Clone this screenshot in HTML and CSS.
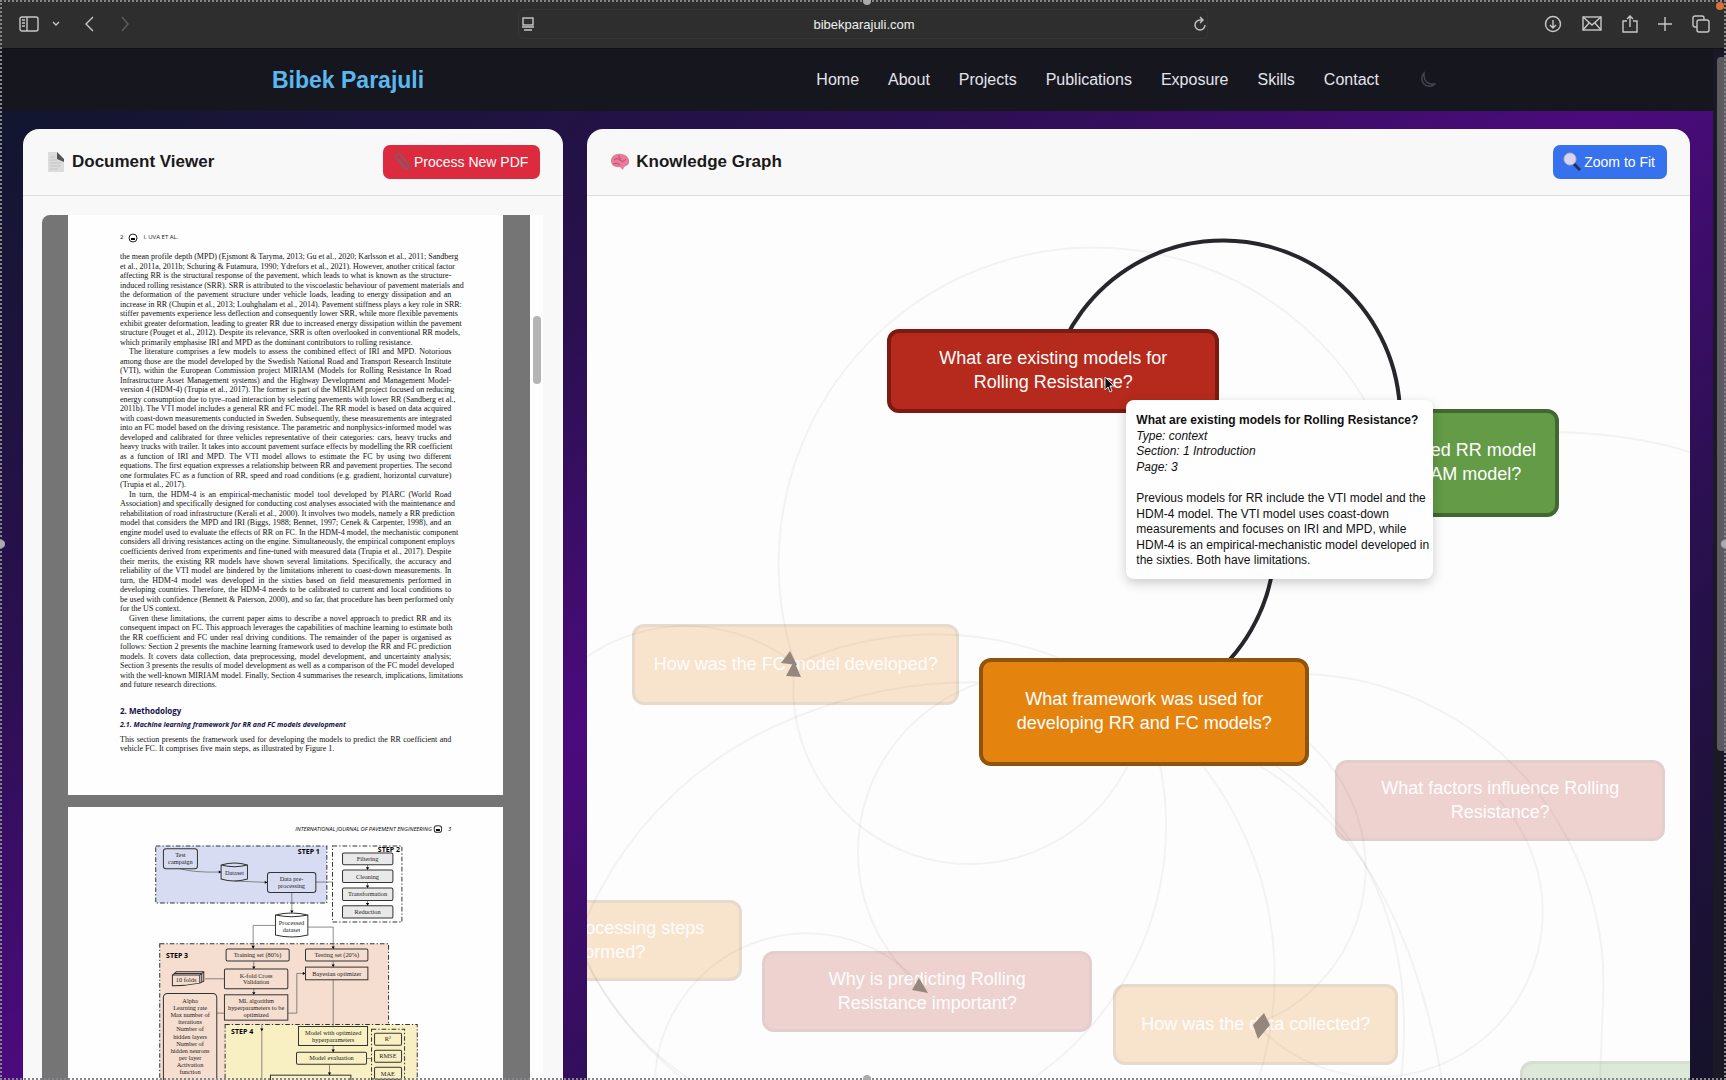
FILE: index.html
```html
<!DOCTYPE html>
<html lang="en">
	<head>
		<meta charset="utf-8" />
		<title>Bibek Parajuli - Knowledge Graph</title>
		<link rel="stylesheet" href="styles.css">
	</head>
	<body>
		<div class="toolbar">
			<div class="tools">
				<button aria-label="Sidebar"><svg width="20" height="16" viewBox="0 0 20 16"><rect x="1" y="1" width="18" height="14" rx="2"/><path d="M8 1v14M3 4h3M3 7h3M3 10h3"/></svg></button>
				<button class="tab-menu" aria-label="Tab groups"><svg width="8" height="8" viewBox="0 0 8 8"><path d="M1 2l3 3 3-3"/></svg></button>
				<button class="back" aria-label="Back"><svg width="10" height="16" viewBox="0 0 10 16"><path d="M9 1L2 8l7 7"/></svg></button>
				<button class="forward" aria-label="Forward"><svg width="10" height="16" viewBox="0 0 10 16"><path d="M2 1l6 7-6 7"/></svg></button>
			</div>
			<div class="address">
				<button aria-label="Reader"><svg width="14" height="14" viewBox="0 0 14 14"><rect x="2" y="1" width="10" height="7"/><path d="M1 10h12M3 13h8"/></svg></button>
				<input type="text" value="bibekparajuli.com" aria-label="Address">
				<button aria-label="Reload"><svg width="14" height="16" viewBox="0 0 14 16"><path d="M12 9a5 5 0 1 1-5-5h2M7 1l3 3-3 3"/></svg></button>
			</div>
			<div class="tools actions">
				<button aria-label="Downloads"><svg width="18" height="18" viewBox="0 0 18 18"><circle cx="9" cy="9" r="7.500"/><path d="M9 5v8M6 10l3 3 3-3"/></svg></button>
				<button aria-label="Mail"><svg width="20" height="16" viewBox="0 0 20 16"><rect x="1" y="1" width="18" height="13"/><path d="M1 1l9 8 9-8M1 14l6-7M19 14l-6-7"/></svg></button>
				<button aria-label="Share"><svg width="16" height="18" viewBox="0 0 16 18"><path d="M5 6H1v11h14V6h-4M8 12V1M5 4l3-3 3 3"/></svg></button>
				<button aria-label="New tab"><svg width="14" height="14" viewBox="0 0 14 14"><path d="M7 0v14M0 7h14"/></svg></button>
				<button aria-label="All tabs"><svg width="18" height="18" viewBox="0 0 18 18"><rect x="5" y="5" width="12" height="12" rx="2"/><path d="M5 12H3a2 2 0 0 1-2-2V3a2 2 0 0 1 2-2h7a2 2 0 0 1 2 2v2"/></svg></button>
			</div>
		</div>

		<div class="window">
			<div class="page">
				<header class="site-header">
					<div class="site-nav">
						<a class="logo" href="#">Bibek Parajuli</a>
						<nav>
							<a href="#">Home</a>
							<a href="#">About</a>
							<a href="#">Projects</a>
							<a href="#">Publications</a>
							<a href="#">Exposure</a>
							<a href="#">Skills</a>
							<a href="#">Contact</a>
							<button class="theme" aria-label="Dark mode"><svg width="18" height="18" viewBox="0 0 18 18"><path d="M6 2a7 7 0 1 0 11 11h-3A8 8 0 0 1 6 5z"/></svg></button>
						</nav>
					</div>
				</header>

				<main class="panels">
					<section class="panel">
						<div class="panel-header">
							<h2><svg width="20" height="22" viewBox="0 0 20 22"><path d="M2 1h9l7 7v13H2z" fill="#dcdcdc"/><path d="M11 1l7 7v3l-7-3z" fill="#555"/><path d="M4 6h5M4 9h7M4 12h11M4 15h11M4 18h8" stroke="#c4c4c4"/></svg>Document Viewer</h2>
							<button class="btn red"><svg width="18" height="20" viewBox="0 0 18 20"><path d="M13 17L3 6a3 3 0 0 1 4-4l9 11a2 2 0 0 1-3 3L6 7" fill="none" stroke="#8d5560" stroke-width="2"/></svg>Process New PDF</button>
						</div>
						<div class="viewer">
							<div class="pdf">
								<article class="sheet">
									<div class="running">2 <svg width="10" height="10" viewBox="0 0 10 10"><circle cx="5" cy="5" r="4" fill="none" stroke="#222"/><path d="M3 5h4v2H3z"/></svg> I. UVA ET AL.</div>
									<p>
										<span>the mean profile depth (MPD) (Ejsmont &amp; Taryma, 2013; Gu et al., 2020; Karlsson et al., 2011; Sandberg</span>
										<span>et al., 2011a, 2011b; Schuring &amp; Futamura, 1990; Ydrefors et al., 2021). However, another critical factor</span>
										<span>affecting RR is the structural response of the pavement, which leads to what is known as the structure-</span>
										<span>induced rolling resistance (SRR). SRR is attributed to the viscoelastic behaviour of pavement materials and</span>
										<span>the deformation of the pavement structure under vehicle loads, leading to energy dissipation and an</span>
										<span>increase in RR (Chupin et al., 2013; Louhghalam et al., 2014). Pavement stiffness plays a key role in SRR:</span>
										<span>stiffer pavements experience less deflection and consequently lower SRR, while more flexible pavements</span>
										<span>exhibit greater deformation, leading to greater RR due to increased energy dissipation within the pavement</span>
										<span>structure (Pouget et al., 2012). Despite its relevance, SRR is often overlooked in conventional RR models,</span>
										<span>which primarily emphasise IRI and MPD as the dominant contributors to rolling resistance.</span>
									</p>
									<p class="indent">
										<span>The literature comprises a few models to assess the combined effect of IRI and MPD. Notorious</span>
										<span>among those are the model developed by the Swedish National Road and Transport Research Institute</span>
										<span>(VTI), within the European Commission project MIRIAM (Models for Rolling Resistance In Road</span>
										<span>Infrastructure Asset Management systems) and the Highway Development and Management Model-</span>
										<span>version 4 (HDM-4) (Trupia et al., 2017). The former is part of the MIRIAM project focused on reducing</span>
										<span>energy consumption due to tyre–road interaction by selecting pavements with lower RR (Sandberg et al.,</span>
										<span>2011b). The VTI model includes a general RR and FC model. The RR model is based on data acquired</span>
										<span>with coast-down measurements conducted in Sweden. Subsequently, these measurements are integrated</span>
										<span>into an FC model based on the driving resistance. The parametric and nonphysics-informed model was</span>
										<span>developed and calibrated for three vehicles representative of their categories: cars, heavy trucks and</span>
										<span>heavy trucks with trailer. It takes into account pavement surface effects by modelling the RR coefficient</span>
										<span>as a function of IRI and MPD. The VTI model allows to estimate the FC by using two different</span>
										<span>equations. The first equation expresses a relationship between RR and pavement properties. The second</span>
										<span>one formulates FC as a function of RR, speed and road conditions (e.g. gradient, horizontal curvature)</span>
										<span>(Trupia et al., 2017).</span>
									</p>
									<p class="indent">
										<span>In turn, the HDM-4 is an empirical-mechanistic model tool developed by PIARC (World Road</span>
										<span>Association) and specifically designed for conducting cost analyses associated with the maintenance and</span>
										<span>rehabilitation of road infrastructure (Kerali et al., 2000). It involves two models, namely a RR prediction</span>
										<span>model that considers the MPD and IRI (Biggs, 1988; Bennet, 1997; Cenek &amp; Carpenter, 1998), and an</span>
										<span>engine model used to evaluate the effects of RR on FC. In the HDM-4 model, the mechanistic component</span>
										<span>considers all driving resistances acting on the engine. Simultaneously, the empirical component employs</span>
										<span>coefficients derived from experiments and fine-tuned with measured data (Trupia et al., 2017). Despite</span>
										<span>their merits, the existing RR models have shown several limitations. Specifically, the accuracy and</span>
										<span>reliability of the VTI model are hindered by the limitations inherent to coast-down measurements. In</span>
										<span>turn, the HDM-4 model was developed in the sixties based on field measurements performed in</span>
										<span>developing countries. Therefore, the HDM-4 needs to be calibrated to current and local conditions to</span>
										<span>be used with confidence (Bennett &amp; Paterson, 2000), and so far, that procedure has been performed only</span>
										<span>for the US context.</span>
									</p>
									<p class="indent">
										<span>Given these limitations, the current paper aims to describe a novel approach to predict RR and its</span>
										<span>consequent impact on FC. This approach leverages the capabilities of machine learning to estimate both</span>
										<span>the RR coefficient and FC under real driving conditions. The remainder of the paper is organised as</span>
										<span>follows: Section 2 presents the machine learning framework used to develop the RR and FC prediction</span>
										<span>models. It covers data collection, data preprocessing, model development, and uncertainty analysis;</span>
										<span>Section 3 presents the results of model development as well as a comparison of the FC model developed</span>
										<span>with the well-known MIRIAM model. Finally, Section 4 summarises the research, implications, limitations</span>
										<span>and future research directions.</span>
									</p>
									<h3>2. Methodology</h3>
									<h4>2.1. Machine learning framework for RR and FC models development</h4>
									<p>
										<span>This section presents the framework used for developing the models to predict the RR coefficient and</span>
										<span>vehicle FC. It comprises five main steps, as illustrated by Figure 1.</span>
									</p>
								</article>
								<article class="sheet figure">
									<svg viewBox="84 52 1305 900">
										<text class="head" x="970" y="125">INTERNATIONAL JOURNAL OF PAVEMENT ENGINEERING</text>
										<rect class="box" x="1182" y="108" width="22" height="20" rx="8"/><path d="M1187 118h12v6h-12z"/>
										<text class="head" x="1228" y="125">3</text>

										<rect class="step" x="347" y="169" width="513" height="171" fill="#d8dcf2"/>
										<rect class="step" x="877" y="169" width="208" height="228" fill="#fdfdfd"/>
										<rect class="step" x="359" y="462" width="686" height="460" fill="#f5ddd0"/>
										<rect class="step" x="555" y="704" width="576" height="240" fill="#f8f0c2"/>
										<text class="title" x="806" y="192">STEP 1</text>
										<text class="title" x="1046" y="188">STEP 2</text>
										<text class="title" x="411" y="504">STEP 3</text>
										<text class="title" x="606" y="732">STEP 4</text>

										<g class="line">
											<path d="M420 237q40 12 122 10M583 274l98 4M827 277h50M755 308v62M706 407h-67v70M803 412h76v66M641 514v24M641 597v18M879 514v18M879 570v140M982 225v16M982 278v17M982 332v16M495 567h58M530 670h23M743 670h27V551h26M665 704v240M879 767v20M868 823v33M979 806h15"/>
										</g>
										<path d="M536 242l8 5-8 4zM674 273l8 5-8 4zM750 362h10l-5 8zM634 468h10l-5 9zM874 470h10l-5 8zM636 530h10l-5 8zM636 607h10l-5 8zM874 524h10l-5 8zM977 233h10l-5 8zM977 287h10l-5 8zM977 340h10l-5 8zM788 546l8 5-8 5zM874 779h10l-5 8zM863 848h10l-5 8zM660 716h10l-5 8z"/>
										<g class="box">
											<rect x="370" y="177" width="102" height="60" rx="8"/>
											<path d="M543 226q40-12 79 0v42q-40 12-79 0zM543 226q40 10 79 0"/>
											<rect x="682" y="248" width="145" height="60" rx="8"/>
											<path d="M706 376q48-12 97 0v60q-48 12-97 0zM706 376q48 10 97 0"/>
											<rect class="gray" x="907" y="190" width="151" height="35" rx="4"/>
											<rect class="gray" x="907" y="241" width="151" height="37" rx="4"/>
											<rect class="gray" x="907" y="295" width="151" height="37" rx="4"/>
											<rect class="gray" x="907" y="348" width="151" height="37" rx="4"/>
											<rect x="558" y="478" width="189" height="36" rx="4"/>
											<rect x="796" y="478" width="187" height="36" rx="4"/>
											<rect x="553" y="538" width="190" height="59" rx="4"/>
											<rect x="796" y="532" width="187" height="38"/>
											<rect x="553" y="615" width="190" height="76"/>
											<path d="M397 556h82v24q-40 8-82 8zM397 556l12-10h82v28l-12 6M479 556l12-10M403 551h82v26"/>
											<rect x="370" y="611" width="160" height="320" rx="12"/>
											<rect x="775" y="710" width="207" height="57"/>
											<rect x="769" y="787" width="210" height="36" rx="4"/>
											<rect x="691" y="856" width="241" height="50"/>
											<rect class="step" x="994" y="718" width="99" height="220"/>
											<rect x="1003" y="730" width="81" height="36" rx="4"/>
											<rect x="1003" y="781" width="81" height="36" rx="4"/>
											<rect x="1003" y="832" width="81" height="36" rx="4"/>
										</g>
										<g class="label">
											<text x="421" y="203">Test</text><text x="421" y="223">campaign</text>
											<text x="583" y="256">Dataset</text>
											<text x="754" y="275">Data pre-</text><text x="754" y="296">processing</text>
											<text x="754" y="407">Processed</text><text x="754" y="428">dataset</text>
											<text x="982" y="214">Filtering</text><text x="982" y="267">Cleaning</text>
											<text x="982" y="320">Transformation</text><text x="982" y="374">Reduction</text>
											<text x="652" y="503">Training set (80%)</text><text x="890" y="503">Testing set (20%)</text>
											<text x="648" y="564">K-fold Cross</text><text x="648" y="584">Validation</text>
											<text x="890" y="558">Bayesian optimizer</text>
											<text x="438" y="578">10 folds</text>
											<text x="648" y="640">ML algorithm</text><text x="648" y="661">hyperparameters to be</text><text x="648" y="682">optimized</text>
											<text x="450" y="640">Alpha</text><text x="450" y="661">Learning rate</text><text x="450" y="682">Max number of</text>
											<text x="450" y="704">iterations</text><text x="450" y="725">Number of</text><text x="450" y="747">hidden layers</text>
											<text x="450" y="768">Number of</text><text x="450" y="790">hidden neurons</text><text x="450" y="811">per layer</text>
											<text x="450" y="832">Activation</text><text x="450" y="853">function</text>
											<text x="879" y="736">Model with optimized</text><text x="879" y="757">hyperparameters</text>
											<text x="874" y="812">Model evaluation</text>
											<text x="1043" y="754">R²</text><text x="1043" y="806">RMSE</text><text x="1043" y="857">MAE</text>
										</g>
									</svg>
								</article>
							</div>
							<div class="pdf-scroll"><div class="pdf-thumb"></div></div>
						</div>
					</section>

					<section class="panel">
						<div class="panel-header">
							<h2><svg width="20" height="20" viewBox="0 0 20 20"><path d="M1 9C1 4 6 1 11 2c5 0 9 4 8 9-1 3-4 3-5 4l-1 3-3-3c-5 1-9-2-9-6z" fill="#e87b9c"/><path d="M4 8q3-3 6 0t6-1M3 12q4-2 7 1M9 3q-1 3 2 4" fill="none" stroke="#bd4a72"/></svg>Knowledge Graph</h2>
							<button class="btn blue"><svg width="18" height="20" viewBox="0 0 18 20"><path d="M11 12l6 6" stroke="#26304c" stroke-width="3"/><circle cx="7" cy="7" r="6" fill="#dcd3ec" stroke="#b9b4ce"/></svg>Zoom to Fit</button>
						</div>
						<div class="graph">
							<!-- edges are half circles between two node centres -->
							<svg class="edges" width="1103" height="884" viewBox="587 196 1103 884">
								<g class="faint">
									<path d="M795 664A315 315 0 0 1 1394 463"/>
									<path d="M795 664A176 176 0 0 0 1144 712"/>
									<path d="M795 664A340 340 0 0 1 1073 1286"/>
									<path d="M795 664A175 175 0 0 0 577 940"/>
									<path d="M1144 712A305 305 0 0 1 577 940"/>
									<path d="M1144 712A177 177 0 0 0 926 991"/>
									<path d="M1144 712A165 165 0 0 1 1256 1024"/>
									<path d="M1144 712A310 310 0 0 1 1603 1000L1600 1080"/>
									<path d="M1499 800A165 165 0 0 1 1256 1024"/>
									<path d="M577 940Q640 780 796 717Q960 650 1144 712"/>
									<path d="M1144 712Q1290 760 1364 863Q1420 950 1442 1080"/>
									<path d="M1144 712Q1240 725 1320 803Q1420 910 1401 1080"/>
									<path d="M926 991A152 152 0 0 0 655 1080"/>
									<path d="M577 940Q610 1020 684 1080"/>
									<path d="M1550 432Q1630 433 1690 452"/>
								</g>
								<path class="strong" d="M1053 371A176 176 0 0 1 1394 463"/>
								<path class="strong" d="M1053 371A176 176 0 0 1 1144 712"/>
							</svg>
							<div class="node orange dim fc">How was the FC model developed?</div>
							<div class="node orange dim pre">What data pre-processing steps<br>were performed?</div>
							<div class="node red dim why">Why is predicting Rolling<br>Resistance important?</div>
							<div class="node orange dim data">How was the data collected?</div>
							<div class="node red dim factors">What factors influence Rolling<br>Resistance?</div>
							<div class="node green dim results"></div>
							<div class="node green compare">How does the developed RR model<br>compare to the MIRIAM model?</div>
							<div class="node orange framework">What framework was used for<br>developing RR and FC models?</div>
							<div class="node red existing">What are existing models for<br>Rolling Resistance?</div>
							<svg class="edges" width="1103" height="884" viewBox="587 196 1103 884">
								<path class="arrow" d="M790 651l7 14-16-2zM794 661l7 16-15-1zM919 978l9 15-16-3zM1264 1013l6 12-12 14-5-14z"/>
							</svg>
							<div class="tooltip">
								<b>What are existing models for Rolling Resistance?</b><br>
								<i>Type: context</i><br>
								<i>Section: 1 Introduction</i><br>
								<i>Page: 3</i><br><br>
								Previous models for RR include the VTI model and the<br>
								HDM-4 model. The VTI model uses coast-down<br>
								measurements and focuses on IRI and MPD, while<br>
								HDM-4 is an empirical-mechanistic model developed in<br>
								the sixties. Both have limitations.
							</div>
							<svg class="cursor" width="12" height="18" viewBox="0 0 12 18"><path d="M1 1v13l3-3 2 5 2-1-2-5h4z" fill="#111" stroke="#ddd"/></svg>
						</div>
					</section>
				</main>
			</div>
			<div class="scrollbar"><div class="thumb"></div></div>
		</div>
		<div class="selection"><i class="top"></i><i class="bottom"></i><i class="left"></i><i class="right"></i><i class="corner"></i></div>
	</body>
</html>
```
FILE: styles.css
```css
* {box-sizing:border-box;}
body {margin:0;height:100vh;overflow:hidden;display:flex;flex-direction:column;background:#16161f;font-family:"Liberation Sans", Arial, Helvetica, sans-serif;color:#1a1a1a;}
button {font:inherit;border:0;background:none;padding:0;display:flex;align-items:center;}
a {text-decoration:none;}

/* browser toolbar */
.toolbar {flex:none;height:49px;display:grid;grid-template-columns:3fr 4fr 3fr;align-items:center;background:#2e2e2e;border-bottom:1px solid #111;}
.toolbar svg {fill:none;stroke:#c8c8c8;stroke-width:1.4;}
.tools {display:flex;align-items:center;padding:0 19px;}
.tab-menu {margin-left:13px;}
.back {margin-left:24px;}
.forward {margin-left:26px;opacity:.3;}
.actions {justify-content:flex-end;gap:20px;padding:0 16px;}
.address {display:flex;align-items:center;height:30px;padding:0 0 0 2px;border:1px solid #363636;border-radius:6px;}
.address input {flex:1;min-width:0;border:0;background:none;color:#eee;font:13px "Liberation Sans", Arial, sans-serif;text-align:center;}

.window {flex:1;min-height:0;display:flex;}
.page {flex:1;min-width:0;display:flex;flex-direction:column;background:linear-gradient(to bottom right,#0f172a 0%,#2a1050 30%,#4b0b7d 50%,#2a1050 72%,#15122a 100%);}
.scrollbar {width:13px;padding:8px 0 0 4px;background:#1b1925;}
.thumb {height:694px;border-radius:4px 0 0 4px;background:#5c5a5f;}

/* site header */
.site-header {flex:none;height:62px;padding:0 29px 0 24px;background:#16161f;}
.site-nav {max-width:1164px;height:100%;margin:0 auto;display:flex;align-items:center;justify-content:space-between;}
.logo {font-size:23px;font-weight:bold;color:#5bb8ee;}
nav {display:flex;align-items:center;gap:29px;font-size:16px;}
nav a {color:#e4e4ec;}
.theme {margin-left:10px;}
.theme svg {fill:none;stroke:#44444f;stroke-width:1.5;}

.panels {flex:1;min-height:0;display:grid;grid-template-columns:49fr 100fr;gap:24px;padding:18px 23px 0;}
.panel {min-width:0;min-height:0;display:flex;flex-direction:column;overflow:hidden;background:#f8f8f9;border-radius:16px 16px 0 0;}
.panel-header {flex:none;height:67px;display:flex;align-items:center;justify-content:space-between;padding:0 23px 1px;border-bottom:1px solid #dfdfe2;}
.panel-header h2 {display:flex;align-items:center;gap:6px;margin:0;font-size:17px;font-weight:bold;}
.btn {height:34px;gap:3px;padding:0 12px 0 10px;border-radius:7px;color:#fff;font-size:14px;}
.btn.red {background:#dc2a3e;}
.btn.blue {background:#3672ee;}

/* pdf viewer */
.viewer {flex:1;min-height:0;display:flex;margin:19px 20px 0 19px;}
.pdf {flex:1;min-width:0;overflow:hidden;padding:0 27px 0 26px;background:#757575;border-radius:8px 0 0 0;}
.pdf-scroll {width:13px;padding:101px 2px 0 3px;background:#fdfdfd;}
.pdf-thumb {height:68px;border-radius:4px;background:#b4b4b4;}
.sheet {height:580px;padding:18px 52px 0;background:#fefefe;color:#111;font-family:"Liberation Serif", "Times New Roman", serif;font-size:8px;line-height:1.19;}
.sheet p {margin:0;}
.sheet span {display:block;white-space:nowrap;text-align-last:justify;}
.sheet p span:last-child {text-align-last:left;}
.indent span:first-child {padding-left:9px;}
.running {display:flex;align-items:center;gap:5px;height:10px;margin-bottom:9px;font-size:6px;font-family:"Open Sans", sans-serif;}
.sheet h3 {margin:16px 0 4px;font:bold 8px/10px "Open Sans", sans-serif;color:#14114a;}
.sheet h4 {margin:0 0 5px;font:italic bold 7px/10px "Open Sans", sans-serif;color:#14114a;}
.figure {padding:0;margin-top:12px;}
.figure svg {display:block;width:100%;}
.head {font:italic 17px "Open Sans", sans-serif;text-anchor:middle;}
.step {stroke:#333;stroke-width:3;stroke-dasharray:14 6 4 6;}
.title {font:bold 21px "Open Sans", sans-serif;text-anchor:middle;}
.line {fill:none;stroke:#555;stroke-width:2;}
.box {fill:none;stroke:#333;stroke-width:3;}
.gray {fill:#e9e9e9;}
.label {font:19px "Liberation Serif", serif;text-anchor:middle;fill:#222;}

/* graph */
.graph {position:relative;flex:1;min-height:0;overflow:hidden;background:#fdfdfd;}
.edges {position:absolute;left:0;top:0;fill:none;}
.faint {stroke:#000;stroke-opacity:.045;stroke-width:2;}
.strong {stroke:#26272b;stroke-width:4;}
.arrow {fill:#96877d;}
.node {position:absolute;width:330px;height:81px;padding-bottom:2px;display:flex;align-items:center;justify-content:center;text-align:center;border:4px solid;border-radius:12px;color:#fff;font-size:18px;line-height:24px;white-space:nowrap;}
.node.red {background:#b52a1c;border-color:#7b1912;}
.node.orange {background:#e5830f;border-color:#8f540c;}
.node.green {background:#639b47;border-color:#41682f;}
.node.dim {opacity:.2;border-width:3px;}
.existing {left:300px;top:133px;width:332px;height:84px;}
.compare {left:642px;top:213px;height:108px;}
.framework {left:392px;top:462px;height:108px;}
.fc {left:45px;top:428px;width:327px;}
.pre {left:-175px;top:704px;}
.why {left:175px;top:755px;}
.data {left:526px;top:788px;width:285px;}
.factors {left:748px;top:564px;}
.results {left:933px;top:865px;}
.tooltip {position:absolute;left:539px;top:204px;width:307px;height:179px;padding:13px 10px;background:#fefefe;border-radius:8px;box-shadow:0 4px 12px rgba(0,0,0,.2);font-size:12px;line-height:1.3;color:#111;white-space:nowrap;}
.cursor {position:absolute;left:517px;top:180px;}

/* capture frame round the window */
.selection {position:fixed;inset:0;border:2px dotted #85858a;pointer-events:none;}
.selection i {position:absolute;width:8px;height:8px;border-radius:50%;background:#aaa;}
.selection .top {left:50%;top:-5px;}
.selection .bottom {left:50%;bottom:-5px;}
.selection .left {left:-5px;top:50%;}
.selection .right {right:-5px;top:50%;}
.selection .corner {right:0;top:0;background:#d9703a;}
```
